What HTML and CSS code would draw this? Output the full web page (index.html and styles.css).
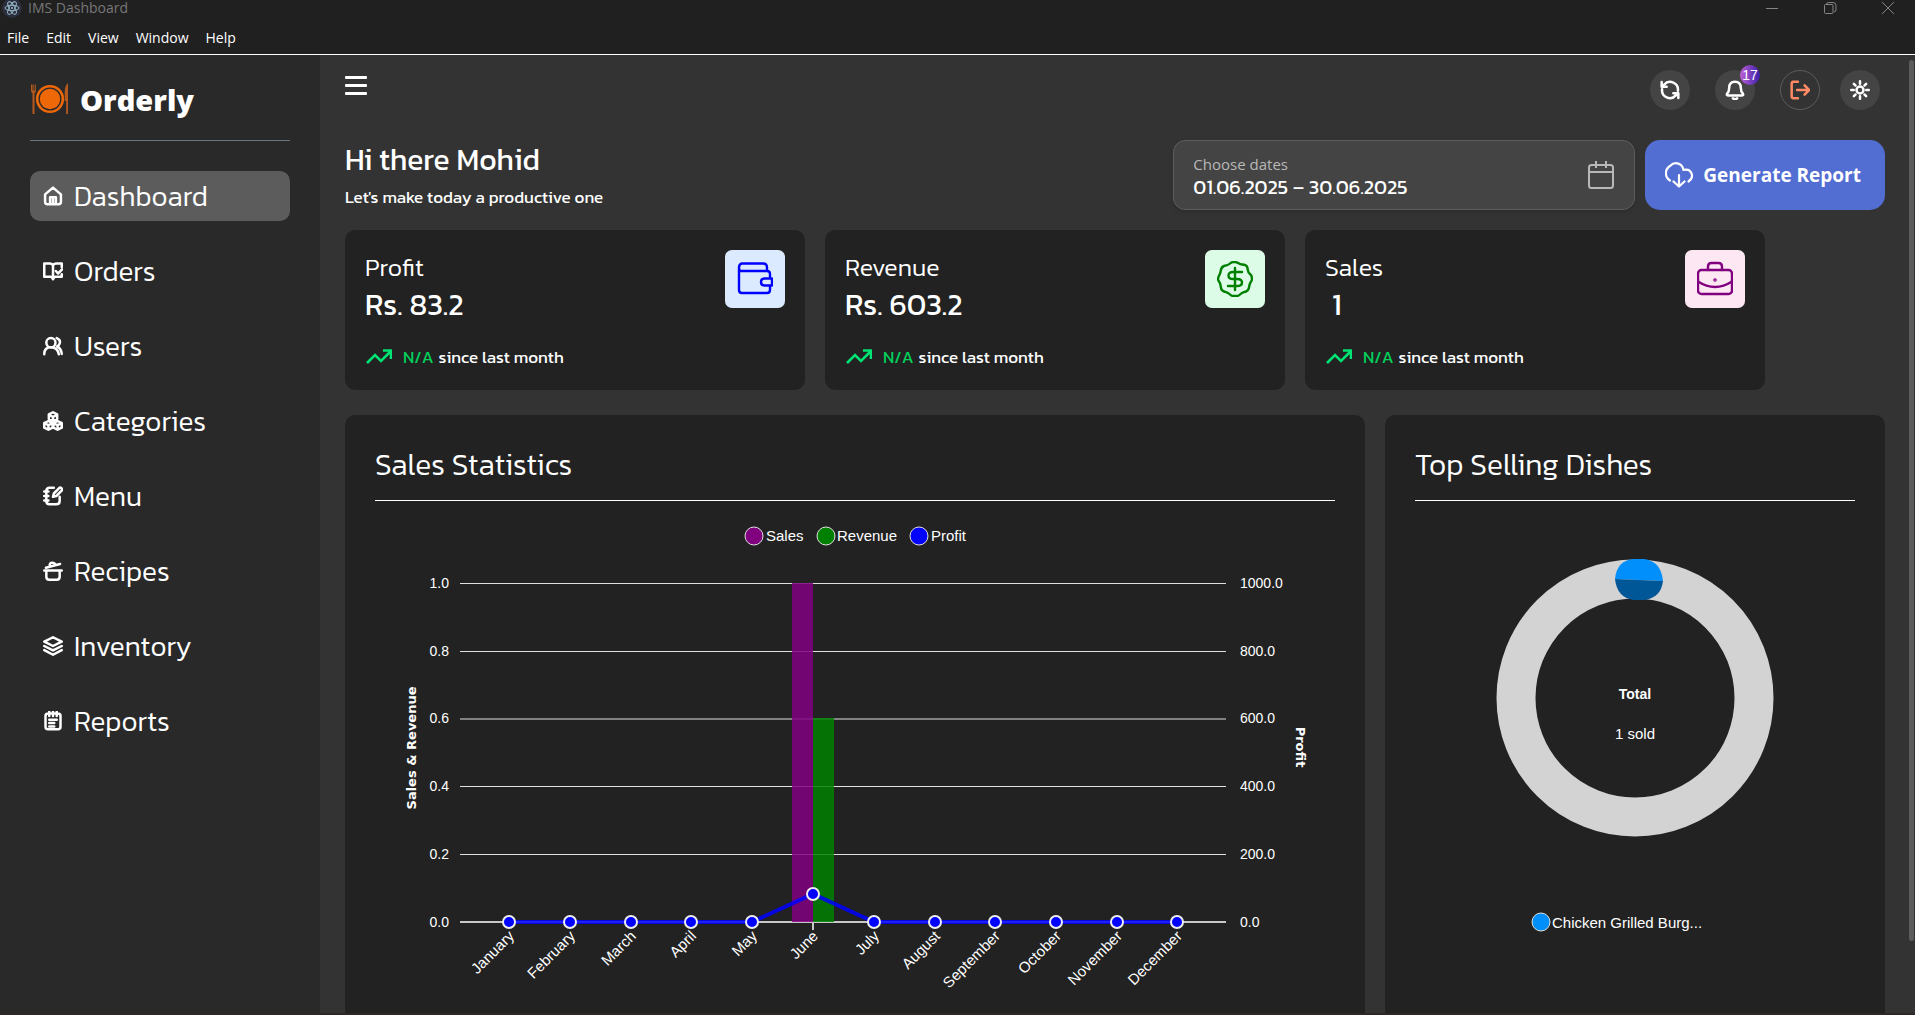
FILE: index.html
```html
<!DOCTYPE html>
<html lang="en">
  <head>
    <meta charset="UTF-8" />
    <meta name="viewport" content="width=device-width, initial-scale=1.0" />
    <title>IMS Dashboard</title>
    <link rel="stylesheet" href="styles.css">
  </head>

  <body>
    <header class="titlebar">
      <div class="window-row">
        <svg class="app-icon" viewBox="0 0 20 20">
          <circle cx="10" cy="10" r="10" fill="#2b2e3b" />
          <g fill="none" stroke="#9fc3d6" stroke-width="0.9">
            <ellipse cx="10" cy="10" rx="7" ry="2.7" />
            <ellipse cx="10" cy="10" rx="7" ry="2.7" transform="rotate(60 10 10)" />
            <ellipse cx="10" cy="10" rx="7" ry="2.7" transform="rotate(120 10 10)" />
          </g>
          <circle cx="10" cy="10" r="1" fill="#9fc3d6" />
        </svg>
        <span class="window-title">IMS Dashboard</span>
        <div class="window-buttons">
          <button aria-label="Minimize"><svg viewBox="0 0 12 12"><path d="M0 6.500h12" /></svg></button>
          <button aria-label="Restore"><svg viewBox="0 0 12 12"><rect x="0.5" y="2.5" width="8.5" height="9" rx="1" /><path d="M2.500 2.500q0-2 2-2h4.500q3 0 3 3v4.500q0 1.500-2 2" /></svg></button>
          <button aria-label="Close"><svg viewBox="0 0 12 12"><path d="M0 0l12 12M12 0L0 12" /></svg></button>
        </div>
      </div>
      <nav class="menubar">
        <a href="#">File</a>
        <a href="#">Edit</a>
        <a href="#">View</a>
        <a href="#">Window</a>
        <a href="#">Help</a>
      </nav>
    </header>

    <div class="app">
      <aside class="sidebar">
        <div class="brand">
          <svg class="brand-logo" viewBox="0 0 40 32">
            <g fill="#ee6808">
              <circle cx="20" cy="16" r="10.200" />
              <path d="M1 1.500v6q0 2 1.500 2.500V31h2V10q1.500-.5 1.500-2.500v-6h-.8v6h-.9v-6h-.9v6h-.8v-6z" fill="#b5591c" />
              <path d="M38 0v31h-1.800V18h-1.500V9q0-6 3.300-9z" fill="#b5591c" />
            </g>
            <circle cx="20" cy="16" r="12.800" fill="none" stroke="#ee6808" stroke-width="2.600" />
          </svg>
          <span>Orderly</span>
        </div>
        <nav class="nav">
          <a href="#" class="nav-item active">
            <svg viewBox="0 0 24 24"><path d="M2.500 10L12 2l9.500 8v9q0 3-3 3h-13q-3 0-3-3zM8.500 22v-8.500h7V22M12 14v8" /></svg>
            Dashboard
          </a>
          <a href="#" class="nav-item">
            <svg viewBox="0 0 24 24"><path d="M12 5.500Q11 3 8 3H1.500v16H9q2 0 3 3 1-3 3-3h7.500v-3M12 5.500Q13 3 16 3h6.500v4.500M12 5.500V22M15.500 12l2.500 3 5-5" /></svg>
            Orders
          </a>
          <a href="#" class="nav-item">
            <svg viewBox="0 0 24 24"><circle cx="9.500" cy="8" r="5.500" /><path d="M1.500 22q0-8.500 8-8.500t9.500 8.500M16.500 2.500q5 2 3.500 6.500-1 2.500-3 3.500 5 3 5.500 9" /></svg>
            Users
          </a>
          <a href="#" class="nav-item">
            <svg viewBox="0 0 24 24"><path d="M12 1.500l5 2.500v5.500l-5 2.500-5-2.500V4zM6.500 12l5 2.500V20l-5 2.500-5-2.500v-5.500zM17.500 12l5 2.500V20l-5 2.500-5-2.500v-5.500zM7 4.500l5 2.500 5-2.500M12 7v5M1.500 14.500l5 2.500 5-2.500 6 2.500 5-2.500M6.500 17v5M17.500 17v5" /></svg>
            Categories
          </a>
          <a href="#" class="nav-item">
            <svg viewBox="0 0 24 24"><path d="M13 2H8Q4 2 4 6v12q0 4 4 4h8q4 0 4-4v-5M1.500 6.500h5M1.500 12h5M1.500 17.500h5M12 13l1-4 7-7q1.500-.5 2.500 1t.5 2l-7 7z" /></svg>
            Menu
          </a>
          <a href="#" class="nav-item">
            <svg viewBox="0 0 24 24"><path d="M1.500 11.500h21M4 11.500V19q0 3.500 3.500 3.500h9q3.500 0 3.500-3.500v-7.500M3.500 8l17-4.500M8 6.500Q7.500 2 11 2t4 3" /></svg>
            Recipes
          </a>
          <a href="#" class="nav-item">
            <svg viewBox="0 0 24 24"><path d="M12 1.500l10.500 5.300L12 12 1.500 6.800zM1.500 12L12 17.300 22.500 12M1.500 17L12 22.500 22.500 17" /></svg>
            Inventory
          </a>
          <a href="#" class="nav-item">
            <svg viewBox="0 0 24 24"><path d="M6 3h12q3 0 3 3v13q0 3-3 3H6q-3 0-3-3V6q0-3 3-3zM7.500 1v5M12 1v5M16.500 1v5M7.500 10.500h9M7.500 14.500h6M7.500 18.500h6" /></svg>
            Reports
          </a>
        </nav>
      </aside>

      <main class="main">
        <div class="topbar">
          <button class="menu-toggle" aria-label="Toggle sidebar"><span></span><span></span><span></span></button>
          <div class="actions">
            <button class="round-btn" aria-label="Refresh">
              <svg viewBox="0 0 24 24"><path d="M21.500 13A9.500 9.500 0 0 0 5 5.500L2.500 8M2 2.500V8h6M2.500 11A9.500 9.500 0 0 0 19 18.500l2.500-2.500M22 21.500V16h-6" /></svg>
            </button>
            <button class="round-btn" aria-label="Notifications">
              <svg viewBox="0 0 24 24"><path d="M2.500 16.500Q5 14 5 9.500 5 2 12 2t7 7.500q0 4.500 2.500 7 1 2-1 2h-17q-2 0-1-2zM9.500 22q2.500 2 5 0" /></svg>
              <span class="badge">17</span>
            </button>
            <button class="round-btn logout" aria-label="Log out">
              <svg viewBox="0 0 24 24"><path d="M9.500 2H4Q2 2 2 5v14q0 3 2 3h5.500M8.500 12H23M17.500 6.500L23 12l-5.500 5.500" /></svg>
            </button>
            <button class="round-btn theme" aria-label="Toggle theme">
              <svg viewBox="0 0 24 24"><circle cx="12" cy="12" r="4.200" /><path d="M12 1.500v3M12 19.500v3M1.500 12h3M19.500 12h3M4.600 4.600l2 2M17.400 17.400l2 2M4.600 19.400l2-2M17.400 6.600l2-2" /></svg>
            </button>
          </div>
        </div>

        <div class="intro">
          <div class="greeting">
            <h1>Hi there Mohid</h1>
            <p>Let's make today a productive one</p>
          </div>
          <button class="date-picker">
            <span class="date-text">
              <span class="date-label">Choose dates</span>
              <span class="date-value">01.06.2025 – 30.06.2025</span>
            </span>
            <svg viewBox="0 0 26 28"><rect x="1" y="4" width="24" height="23" rx="2.500" /><path d="M1 11h24M8 0v7M18 0v7" /></svg>
          </button>
          <button class="report-btn">
            <svg viewBox="0 0 28 26"><path d="M5 18.500A8.500 8.500 0 0 1 5 4Q10-1 16 3q2 2 2.500 5 7-1.500 8.500 5 .5 4-3.500 6.500M14 13v11M8.500 19.500L14 24.500l5.500-5" /></svg>
            Generate Report
          </button>
        </div>

        <section class="stats">
          <article class="card">
            <div class="card-top">
              <div>
                <h2>Profit</h2>
                <p class="value">Rs. 83.2</p>
              </div>
              <span class="card-icon profit">
                <svg viewBox="0 0 36 36"><path d="M2 6v23q0 3 3 3h25q3 0 3-3v-4.500M33 17v-4q0-3-3-3H4.500Q2 10 2 6.500T5 2.500h21q4 0 4 4V10M35 17.500h-7.500q-3.500 0-3.500 3.500t3.500 3.500H35z" /></svg>
              </span>
            </div>
            <p class="trend"><svg viewBox="0 0 26 16"><path d="M1 14l8-8 6 6L25 2M17 1.500h8V10" /></svg><b>N/A</b> since last month</p>
          </article>

          <article class="card">
            <div class="card-top">
              <div>
                <h2>Revenue</h2>
                <p class="value">Rs. 603.2</p>
              </div>
              <span class="card-icon revenue">
                <svg viewBox="0 0 36 36"><path d="M18 1C21 1 22 3.500 25 3.500S30 4 30.500 7 30.500 11 33 13 34.500 16 35 18C35 20.500 33 21 32.500 24S32 29.500 29 30.500 25 31.500 23 33.500 20 35 18 35 15 35.500 13 33.500 10 31.500 7 30.500 4 27.500 3.500 24 1 20.500 1 18 3 14 3.500 11 4 6 7 5 11 4.500 13 2.500 16 1 18 1zM18 7v22M25 11h-9q-4.500 0-4.500 3.500T16 18h4q5 0 5 3.500T20 25h-9" /></svg>
              </span>
            </div>
            <p class="trend"><svg viewBox="0 0 26 16"><path d="M1 14l8-8 6 6L25 2M17 1.500h8V10" /></svg><b>N/A</b> since last month</p>
          </article>

          <article class="card">
            <div class="card-top">
              <div>
                <h2>Sales</h2>
                <p class="value indent">1</p>
              </div>
              <span class="card-icon sales">
                <svg viewBox="0 0 36 36"><rect x="1" y="9" width="34" height="24" rx="3.500" /><path d="M11 9V5.500Q11 2 14.500 2h7Q25 2 25 5.500V9M1 20.500q17 11 34 0" /><circle cx="18" cy="19" r="0.600" /></svg>
              </span>
            </div>
            <p class="trend"><svg viewBox="0 0 26 16"><path d="M1 14l8-8 6 6L25 2M17 1.500h8V10" /></svg><b>N/A</b> since last month</p>
          </article>
        </section>

        <section class="charts">
          <article class="panel">
            <h2>Sales Statistics</h2>
            <svg class="chart" viewBox="0 0 960 560">
              <!-- legend -->
              <g class="legend">
                <circle cx="379" cy="35" r="9" fill="purple" />
                <text x="391" y="40">Sales</text>
                <circle cx="451" cy="35" r="9" fill="green" />
                <text x="462" y="40">Revenue</text>
                <circle cx="544" cy="35" r="9" fill="blue" />
                <text x="556" y="40">Profit</text>
              </g>

              <path class="grid" d="M85 82.500h766M85 150.500h766M85 218h766M85 285.500h766M85 353.500h766" />
              <path class="axis" d="M85 421h766M438 421v8" />

              <g class="ticks left">
                <text x="74" y="87">1.0</text>
                <text x="74" y="155">0.8</text>
                <text x="74" y="222">0.6</text>
                <text x="74" y="290">0.4</text>
                <text x="74" y="358">0.2</text>
                <text x="74" y="426">0.0</text>
              </g>
              <g class="ticks">
                <text x="865" y="87">1000.0</text>
                <text x="865" y="155">800.0</text>
                <text x="865" y="222">600.0</text>
                <text x="865" y="290">400.0</text>
                <text x="865" y="358">200.0</text>
                <text x="865" y="426">0.0</text>
              </g>

              <text class="axis-title" transform="translate(41 247) rotate(-90)">Sales &amp; Revenue</text>
              <text class="axis-title" transform="translate(921 246) rotate(90)">Profit</text>

              <rect class="bar" x="417" y="82" width="21" height="339" fill="purple" />
              <rect class="bar" x="438" y="217" width="21" height="204" fill="green" />

              <polyline class="line" points="134,421 195,421 256,421 316,421 377,421 438,393 499,421 560,421 620,421 681,421 742,421 802,421" />
              <g class="marks">
                <circle cx="134" cy="421" r="6" />
                <circle cx="195" cy="421" r="6" />
                <circle cx="256" cy="421" r="6" />
                <circle cx="316" cy="421" r="6" />
                <circle cx="377" cy="421" r="6" />
                <circle cx="438" cy="393" r="6" />
                <circle cx="499" cy="421" r="6" />
                <circle cx="560" cy="421" r="6" />
                <circle cx="620" cy="421" r="6" />
                <circle cx="681" cy="421" r="6" />
                <circle cx="742" cy="421" r="6" />
                <circle cx="802" cy="421" r="6" />
              </g>

              <g class="months">
                <text transform="translate(140 436) rotate(-45)">January</text>
                <text transform="translate(201 436) rotate(-45)">February</text>
                <text transform="translate(262 436) rotate(-45)">March</text>
                <text transform="translate(322 436) rotate(-45)">April</text>
                <text transform="translate(383 436) rotate(-45)">May</text>
                <text transform="translate(444 436) rotate(-45)">June</text>
                <text transform="translate(505 436) rotate(-45)">July</text>
                <text transform="translate(566 436) rotate(-45)">August</text>
                <text transform="translate(626 436) rotate(-45)">September</text>
                <text transform="translate(687 436) rotate(-45)">October</text>
                <text transform="translate(748 436) rotate(-45)">November</text>
                <text transform="translate(808 436) rotate(-45)">December</text>
              </g>
            </svg>
          </article>

          <article class="panel">
            <h2>Top Selling Dishes</h2>
            <svg class="chart" viewBox="0 0 440 560">
              <circle cx="220" cy="197" r="119" fill="none" stroke="#d3d3d3" stroke-width="39" />
              <path d="M200 78q2-19 19-20h10q17 2 19 22z" fill="#008ffb" />
              <path d="M200 78q2 19 19 21h10q17-2 19-19z" fill="#005798" />
              <g class="donut-text">
                <text class="total" x="220" y="198">Total</text>
                <text x="220" y="238">1 sold</text>
              </g>
              <g class="legend">
                <circle cx="126" cy="421" r="9" fill="#008ffb" />
                <text x="137" y="427">Chicken Grilled Burg...</text>
              </g>
            </svg>
          </article>
        </section>

        <div class="scroll-thumb"></div>
      </main>
    </div>
  </body>
</html>
```

FILE: styles.css
```css
* {
  box-sizing: border-box;
  margin: 0;
  padding: 0;
}

body {
  height: 100vh;
  display: flex;
  flex-direction: column;
  overflow: hidden;
  background: #333;
  color: #fff;
  font-family: Kanit, Roboto, "Liberation Sans", sans-serif;
  font-weight: 300;
}

button {
  border: none;
  background: none;
  color: inherit;
  font-family: inherit;
  cursor: pointer;
}

a {
  color: inherit;
  text-decoration: none;
}

svg {
  display: block;
  flex-shrink: 0;
}

/* window frame */
.titlebar {
  flex-shrink: 0;
  height: 55px;
  background: #202020;
  border-bottom: 1px solid #fff;
  font-family: "Segoe UI", "Open Sans", sans-serif;
  font-weight: 400;
}

.window-row {
  display: flex;
  align-items: center;
  height: 15px;
  padding-left: 2px;
}

.app-icon {
  width: 20px;
  height: 20px;
}

.window-title {
  margin-left: 6px;
  font-size: 14px;
  color: #777;
}

.window-buttons {
  display: flex;
  gap: 46px;
  margin-left: auto;
  padding-right: 21px;
}

.window-buttons svg {
  width: 12px;
  height: 12px;
  overflow: visible;
  fill: none;
  stroke: #858585;
}

.menubar {
  display: flex;
  gap: 17px;
  padding: 13px 7px 0;
  font-size: 14px;
  line-height: 20px;
}

/* layout */
.app {
  flex: 1;
  min-height: 0;
  display: flex;
  border-bottom: 2px solid #302626;
}

.sidebar {
  width: 320px;
  flex-shrink: 0;
  padding: 24px 30px;
  background: #292929;
}

.main {
  flex: 1;
  min-width: 0;
  position: relative;
  overflow: hidden;
  padding: 15px 30px 0 25px;
}

/* sidebar */
.brand {
  display: flex;
  align-items: center;
  gap: 10px;
  height: 62px;
  padding-bottom: 21px;
  margin-bottom: 30px;
  border-bottom: 1px solid #6b7280;
  font-family: "Open Sans", sans-serif;
  font-size: 29px;
  font-weight: 800;
}

.brand-logo {
  width: 40px;
  height: 32px;
}

.nav {
  display: flex;
  flex-direction: column;
  gap: 25px;
}

.nav-item {
  display: flex;
  align-items: center;
  gap: 11px;
  height: 50px;
  padding: 0 13px;
  border-radius: 10px;
  font-size: 28px;
}

.nav-item.active {
  background: #5c5c5c;
}

.nav-item svg {
  width: 20px;
  height: 20px;
}

.nav-item svg,
.round-btn svg {
  fill: none;
  stroke: currentColor;
  stroke-width: 3;
  stroke-linecap: round;
  stroke-linejoin: round;
}

/* top bar */
.topbar {
  display: flex;
  justify-content: space-between;
  align-items: flex-start;
  height: 70px;
}

.menu-toggle {
  display: flex;
  flex-direction: column;
  gap: 5px;
  padding: 6px 0;
}

.menu-toggle span {
  width: 22px;
  height: 3px;
  border-radius: 1px;
  background: #fff;
}

.actions {
  display: flex;
  gap: 25px;
  padding-right: 5px;
}

.round-btn {
  position: relative;
  display: flex;
  align-items: center;
  justify-content: center;
  width: 40px;
  height: 40px;
  border-radius: 50%;
  background: #444;
}

.round-btn svg {
  width: 20px;
  height: 20px;
}

.round-btn.logout {
  background: none;
  border: 1px solid #5c5c5c;
  color: #ff8a65;
}

.round-btn.theme {
  margin-left: -5px;
}

.badge {
  position: absolute;
  top: -5px;
  right: -5px;
  width: 20px;
  height: 20px;
  border-radius: 50%;
  background: linear-gradient(90deg, #c061d8, #3a1fa8);
  font-family: "Liberation Sans", Arial, sans-serif;
  font-size: 14px;
  line-height: 20px;
}

/* greeting row */
.intro {
  display: flex;
  gap: 10px;
  height: 70px;
  margin-bottom: 20px;
}

.greeting {
  margin-right: auto;
}

.greeting h1 {
  font-size: 30px;
  font-weight: 400;
  line-height: 40px;
}

.greeting p {
  font-size: 17px;
  font-weight: 400;
  line-height: 34px;
}

.date-picker {
  display: flex;
  align-items: center;
  justify-content: space-between;
  width: 30%;
  padding: 0 20px 0 19px;
  border: 1px solid #5c5c5c;
  border-radius: 12px;
  background: #444;
  box-shadow: 0 2px 4px rgba(0, 0, 0, 0.15);
  text-align: left;
}

.date-text {
  padding-top: 2px;
}

.date-picker svg {
  width: 26px;
  height: 28px;
  fill: none;
  stroke: #b8b8b8;
  stroke-width: 2;
}

.date-label,
.date-value {
  display: block;
  line-height: 23px;
}

.date-label {
  font-family: "Segoe UI", "Open Sans", sans-serif;
  font-size: 15px;
  color: #b8b8b8;
}

.date-value {
  font-size: 20px;
  font-weight: 400;
}

.report-btn {
  display: flex;
  align-items: center;
  gap: 10px;
  padding: 0 24px 0 20px;
  border-radius: 15px;
  background: #526ed3;
  font-family: "Segoe UI", "Open Sans", sans-serif;
  font-size: 19px;
  font-weight: 700;
}

.report-btn svg {
  width: 28px;
  height: 26px;
  fill: none;
  stroke: #fff;
  stroke-width: 2.2;
  stroke-linecap: round;
  stroke-linejoin: round;
}

/* stat cards */
.stats {
  display: grid;
  grid-template-columns: repeat(3, 1fr);
  gap: 20px;
  margin: 0 120px 25px 0;
}

.card {
  height: 160px;
  padding: 20px;
  border-radius: 10px;
  background: #222;
}

.card-top {
  display: flex;
  justify-content: space-between;
  height: 90px;
}

.card h2 {
  font-size: 25px;
  font-weight: 300;
  line-height: 34px;
}

.card .value {
  font-size: 30px;
  font-weight: 400;
  line-height: 42px;
}

.card .indent {
  padding-left: 7px;
}

.card-icon {
  display: flex;
  align-items: center;
  justify-content: center;
  width: 60px;
  height: 58px;
  border-radius: 7px;
}

.card-icon svg {
  width: 36px;
  height: 36px;
  fill: none;
  stroke: currentColor;
  stroke-width: 2.4;
  stroke-linecap: round;
  stroke-linejoin: round;
}

.card-icon.profit {
  background: #dbeafe;
  color: blue;
}

.card-icon.revenue {
  background: #dcfce7;
  color: green;
}

.card-icon.sales {
  background: #fce7f3;
  color: purple;
}

.trend {
  display: flex;
  align-items: center;
  gap: 5px;
  font-size: 17px;
  font-weight: 400;
  line-height: 34px;
}

.trend svg {
  width: 26px;
  height: 16px;
  margin: 0 6px 0 1px;
  fill: none;
  stroke: #00e272;
  stroke-width: 2.6;
}

.trend b {
  font-weight: 400;
  color: #00d05a;
}

/* chart panels */
.charts {
  display: grid;
  grid-template-columns: 51fr 25fr;
  gap: 20px;
}

.panel {
  padding: 30px 30px 20px;
  border-radius: 10px;
  background: #222;
}

.panel h2 {
  height: 56px;
  border-bottom: 1px solid #fff;
  font-size: 30px;
  font-weight: 300;
  line-height: 40px;
}

.chart {
  width: 100%;
  font-family: "Liberation Sans", Arial, sans-serif;
  font-weight: 400;
}

.chart text {
  fill: #fff;
  font-size: 15px;
}

.legend circle {
  stroke: #e0e0e0;
}

.chart .ticks text,
.chart .total {
  font-size: 14px;
}

.ticks.left,
.months {
  text-anchor: end;
}

.grid {
  stroke: #e0e0e0;
}

.axis {
  stroke: #c8c8c8;
  stroke-width: 2;
}

.bar {
  opacity: 0.85;
}

.line {
  fill: none;
  stroke: blue;
  stroke-width: 4;
  opacity: 0.85;
}

.marks circle {
  fill: blue;
  stroke: #eee;
  stroke-width: 2;
}

.chart .axis-title {
  font-family: "DejaVu Sans", sans-serif;
  font-size: 13px;
  font-weight: 700;
  text-anchor: middle;
}

.donut-text {
  text-anchor: middle;
}

.donut-text .total {
  font-weight: 700;
}

.scroll-thumb {
  position: absolute;
  top: 5px;
  right: 1px;
  width: 5px;
  height: 92%;
  border-radius: 3px;
  background: #5c5c5c;
}
```
